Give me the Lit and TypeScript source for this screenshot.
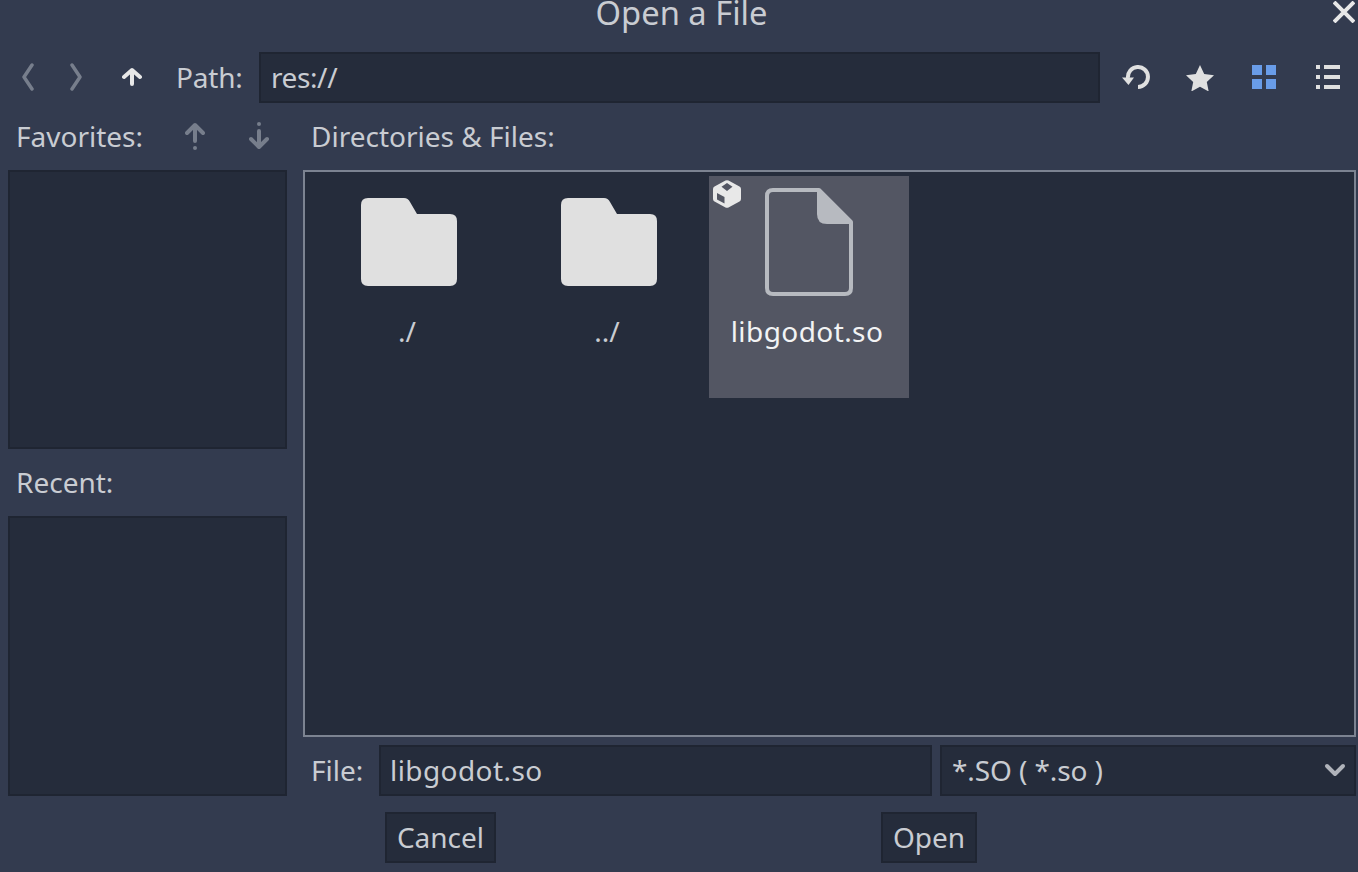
import { LitElement, html, css, svg } from "lit";
import { customElement } from "lit/decorators.js";

const icon = (w: number, h: number, body: unknown, cls = "") =>
  html`<svg class=${cls} width=${w} height=${h} viewBox="0 0 ${w} ${h}">${body}</svg>`;

const folder = icon(96, 88, svg`<path fill="#e0e0e0" d="M7 0H43Q47 0 49 4L56 16H89Q96 16 96 23V81Q96 88 89 88H7Q0 88 0 81V7Q0 0 7 0Z"/>`);

const upGlyph = (c: string) => svg`<path fill="none" stroke=${c} stroke-width="4" stroke-linecap="round" stroke-linejoin="round" d="M10 19V4M2 11L10 3L18 11"/>`;

@customElement("app-root")
export class AppRoot extends LitElement {
  static styles = css`
    :host { display: block; width: 1358px; height: 872px; overflow: hidden; background: #333b4f; font-family: "Noto Sans", sans-serif; font-size: 28px; color: #c9ccd2; }
    * { box-sizing: border-box; }
    svg { display: block; flex: none; }
    .title { position: relative; height: 52px; }
    .title-text { height: 26px; line-height: 26px; padding-left: 5px; text-align: center; font-size: 32.7px; }
    .close { position: absolute; left: 1333px; top: 1px; }
    .toolbar { display: flex; align-items: flex-start; height: 51px; padding-left: 22px; }
    .back { margin: 11px 36px 0 0; }
    .fwd { margin: 11px 40px 0 0; }
    .up { margin: 15px 35px 0 0; }
    .path-label { width: 82px; line-height: 50px; letter-spacing: -0.2px; transform: translateX(-1px); }
    .field { background: #252c3b; border: 2px solid #1f2532; display: flex; align-items: center; height: 51px; padding: 0 0 2px 9px; }
    .path-field { width: 841px; padding-left: 10px; letter-spacing: -0.4px; }
    .tools { display: flex; align-items: flex-start; margin-top: 13px; }
    .reload { margin-left: 22px; }
    .star { margin-left: 36px; }
    .gridi { margin-left: 38px; }
    .listi { margin-left: 40px; }
    .body { display: flex; padding-left: 8px; gap: 16px; margin-top: 17px; }
    .left { width: 279px; display: flex; flex-direction: column; }
    .head { height: 50px; display: flex; align-items: center; padding: 0 0 18px 8px; }
    .head .fav-label { width: 169px; }
    .head .label { line-height: 32px; height: 32px; position: relative; }
    .head svg.f2 { margin-left: 44px; }
    .box { background: #252c3b; border: 2px solid #1f2532; }
    .favs { height: 279px; }
    .recent-label { height: 67px; display: flex; align-items: center; padding: 0 0 2px 8px; }
    .recent { height: 280px; }
    .right { width: 1053px; display: flex; flex-direction: column; }
    .files { height: 567px; background: #252c3b; border: 2px solid #7c8391; padding: 4px; display: flex; align-items: flex-start; }
    .item { width: 200px; height: 222px; position: relative; display: flex; flex-direction: column; align-items: center; }
    .item .thumb { height: 110px; display: flex; align-items: flex-end; }
    .item .name { margin-top: 27px; line-height: 36px; transform: translateX(-2px); }
    .item.sel { background: #535663; color: #f2f3f4; }
    .item.sel .thumb { height: 120px; }
    .item.sel .name { margin-top: 17px; letter-spacing: 0.42px; }
    .cube { position: absolute; left: 4px; top: 4px; }
    .file-row { display: flex; align-items: center; margin-top: 8px; padding-left: 8px; }
    .file-label { width: 68px; padding-bottom: 2px; }
    .file-field { width: 553px; letter-spacing: 0.42px; }
    .filter { width: 416px; margin-left: 8px; padding-left: 10px; justify-content: space-between; padding-right: 8px; letter-spacing: -0.1px; }
    .actions { display: flex; padding-left: 385px; margin-top: 16px; }
    .btn { height: 51px; background: #252c3b; border: 2px solid #1f2532; display: flex; align-items: center; justify-content: center; padding-bottom: 2px; }
    .cancel { width: 111px; }
    .open { width: 96px; margin-left: 385px; }
  `;

  render() {
    const arrowUp = svg`<g fill="#777e8c"><circle cx="10" cy="26" r="2"/></g>${upGlyph("#777e8c")}`;
    const arrowDown = svg`<g transform="translate(0,28) scale(1,-1)">${arrowUp}</g>`;
    return html`
      <div class="title">
        <div class="title-text">Open a File</div>
        ${icon(22, 22, svg`<path stroke="#e8e8e8" stroke-width="4" d="M1 1L21 21M21 1L1 21"/>`, "close")}
      </div>
      <div class="toolbar">
        ${icon(12, 28, svg`<path fill="none" stroke="#777e8c" stroke-width="3.5" stroke-linecap="round" stroke-linejoin="round" d="M10 2L2 14L10 26"/>`, "back")}
        ${icon(12, 28, svg`<path fill="none" stroke="#777e8c" stroke-width="3.5" stroke-linecap="round" stroke-linejoin="round" d="M2 2L10 14L2 26"/>`, "fwd")}
        ${icon(20, 20, svg`<path fill="none" stroke="#e8e8e8" stroke-width="4" stroke-linecap="round" stroke-linejoin="round" d="M10 17V4M2 10L10 3L18 10"/>`, "up")}
        <div class="path-label">Path:</div>
        <div class="field path-field">res://</div>
        <div class="tools">
          ${icon(28, 24, svg`<path fill="none" stroke="#e0e0e0" stroke-width="4" d="M16 22A10 10 0 1 0 6 13"/><path fill="#e0e0e0" d="M0 12.5H12L6.5 20Z"/>`, "reload")}
          ${icon(28, 26, svg`<path fill="#e0e0e0" d="M14 0L18.2 8.9L28 10.2L20.8 17L22.7 26.5L14 21.8L5.3 26.5L7.2 17L0 10.2L9.8 8.9Z"/>`, "star")}
          ${icon(24, 24, svg`<g fill="#699ce8"><rect width="10" height="10"/><rect x="14" width="10" height="10"/><rect y="14" width="10" height="10"/><rect x="14" y="14" width="10" height="10"/></g>`, "gridi")}
          ${icon(24, 24, svg`<g fill="#e0e0e0"><rect width="4" height="4"/><rect y="10" width="4" height="4"/><rect y="20" width="4" height="4"/><rect x="8" width="16" height="4"/><rect x="8" y="10" width="16" height="4"/><rect x="8" y="20" width="16" height="4"/></g>`, "listi")}
        </div>
      </div>
      <div class="body">
        <div class="left">
          <div class="head">
            <span class="label fav-label">Favorites:</span>
            ${icon(20, 28, arrowUp, "f1")}
            ${icon(20, 28, arrowDown, "f2")}
          </div>
          <div class="box favs"></div>
          <div class="recent-label">Recent:</div>
          <div class="box recent"></div>
        </div>
        <div class="right">
          <div class="head"><span class="label">Directories &amp; Files:</span></div>
          <div class="files">
            <div class="item"><div class="thumb">${folder}</div><div class="name">./</div></div>
            <div class="item"><div class="thumb">${folder}</div><div class="name">../</div></div>
            <div class="item sel">
              ${icon(28, 28, svg`<path fill="#e8e8e8" fill-rule="evenodd" d="M12.5 .6Q14 0 15.5 .6L26.5 6.5Q28 7.2 28 9V19Q28 20.8 26.5 21.5L15.5 27.4Q14 28 12.5 27.4L1.5 21.5Q0 20.8 0 19V9Q0 7.2 1.5 6.5ZM14 3L8.5 6.8L14 11L19.5 6.8ZM4 13V19.5L11.5 23.5V17Z"/>`, "cube")}
              <div class="thumb">${icon(88, 108, svg`<path fill="none" stroke="#b7bac0" stroke-width="4" stroke-linejoin="round" d="M54 2H8Q2 2 2 8V100Q2 106 8 106H80Q86 106 86 100V34Z"/><path fill="#b7bac0" d="M52 0L88 36H62Q52 36 52 26Z"/>`)}</div>
              <div class="name">libgodot.so</div>
            </div>
          </div>
          <div class="file-row">
            <div class="file-label">File:</div>
            <div class="field file-field">libgodot.so</div>
            <div class="field filter">
              <span>*.SO ( *.so )</span>
              ${icon(22, 14, svg`<path fill="none" stroke="#b0b3ba" stroke-width="4" stroke-linecap="round" stroke-linejoin="round" d="M3 3L11 11L19 3"/>`)}
            </div>
          </div>
        </div>
      </div>
      <div class="actions">
        <div class="btn cancel">Cancel</div>
        <div class="btn open">Open</div>
      </div>
    `;
  }
}
